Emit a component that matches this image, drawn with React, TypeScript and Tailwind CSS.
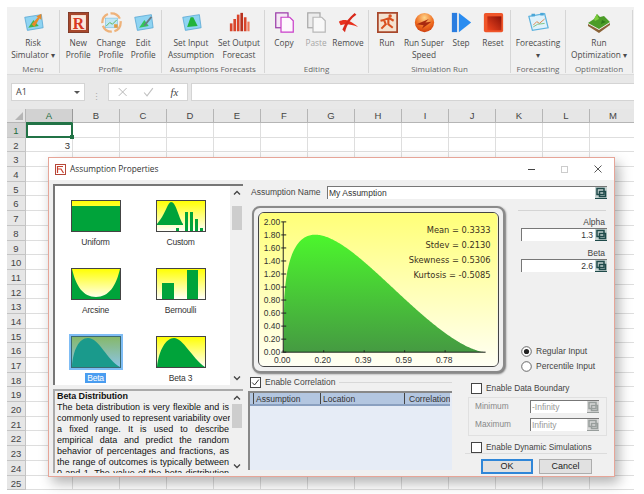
import React from "react";

const ribbonFont = "font-['Open_Sans',sans-serif]";
const dlgFont = "font-['Liberation_Sans',sans-serif]";
const ic = "w-[21px] h-[21px]";

function Panel({ children }: { children?: React.ReactNode }) {
  return (
    <svg viewBox="0 0 24 24" className={ic}>
      <polygon points="2,6 21,3 23,18 5,21" fill="#8fd4f2" stroke="#4b9fd0" strokeWidth="0.8" />
      {children}
    </svg>
  );
}

const Icons: Record<string, React.ReactNode> = {
  risk: (
    <Panel>
      <polygon points="6,18 12,9 18,16" fill="#44b34a" />
      <path d="M10 14 L17 6 L15 5 L21 2 L21 9 L19 7 L13 17 Z" fill="#e8892a" />
    </Panel>
  ),
  newp: (
    <svg viewBox="0 0 24 24" className={ic}>
      <rect x="0.5" y="0.5" width="23" height="23" fill="#a8482c" stroke="#7a3320" />
      <rect x="3.5" y="3.5" width="17" height="17" fill="#fbe9dc" />
      <text x="12" y="19" textAnchor="middle" fontSize="18" fontWeight="700" fill="#d8371f" fontFamily="Liberation Serif, serif">R</text>
    </svg>
  ),
  change: (
    <svg viewBox="0 0 24 24" className={ic}>
      <circle cx="12" cy="12" r="10.5" fill="none" stroke="#eeb27a" strokeWidth="2.6" strokeDasharray="13 3" />
      <rect x="5" y="7" width="14" height="11" fill="#bfe6f6" stroke="#78bfdf" strokeWidth="0.7" />
      <polyline points="6,16 10,12 13,14 18,9" fill="none" stroke="#5fb55f" strokeWidth="1.1" />
      <rect x="15" y="14" width="4" height="4" fill="#e69a3c" />
    </svg>
  ),
  edit: (
    <Panel>
      <polygon points="7,18 13,9 18,16" fill="#33c45a" />
      <path d="M12 15 L20 5 L22 6 L14 16 Z" fill="#6c7a85" />
    </Panel>
  ),
  input: (
    <Panel>
      <polygon points="7,17 11,6 14,6 19,16" fill="#22b33a" />
    </Panel>
  ),
  output: (
    <svg viewBox="0 0 24 24" className={ic}>
      <g fill="#d9442a">
        <rect x="1" y="13" width="3" height="9" />
        <rect x="5" y="8" width="3" height="14" />
        <rect x="9" y="3" width="3" height="19" />
        <rect x="13" y="1" width="3" height="21" fill="#b8321f" />
        <rect x="17" y="6" width="3" height="16" />
        <rect x="21" y="11" width="2.5" height="11" fill="#ee7a5a" />
      </g>
    </svg>
  ),
  copy: (
    <svg viewBox="0 0 24 24" className={ic}>
      <rect x="2" y="1" width="14" height="17" fill="#f4e8f4" stroke="#9a3aa8" strokeWidth="1.4" />
      <path d="M8 6 H18 L22 10 V23 H8 Z" fill="#fdf7fd" stroke="#c93fc9" strokeWidth="1.4" />
    </svg>
  ),
  paste: (
    <svg viewBox="0 0 24 24" className={ic}>
      <rect x="2" y="1" width="14" height="17" fill="#ececec" stroke="#a8a8a8" strokeWidth="1.4" />
      <path d="M8 6 H18 L22 10 V23 H8 Z" fill="#f8f8f8" stroke="#b8b8b8" strokeWidth="1.4" />
    </svg>
  ),
  remove: (
    <svg viewBox="0 0 24 24" className={ic}>
      <path d="M1 11 C8 7 14 10 23 17 C15 14 9 13 3 15 Z" fill="#e8301c" />
      <path d="M19 1 L21 3 C15 7 10 14 8 23 L5 20 C8 12 13 6 19 1 Z" fill="#d9281a" />
    </svg>
  ),
  run: (
    <svg viewBox="0 0 24 24" className={ic}>
      <rect x="1" y="1" width="22" height="22" fill="#f4e2d0" stroke="#a8482c" strokeWidth="2" />
      <path d="M5 19 L10 14 L8 9 L4 10 M8 9 L14 7 L19 10 M13 8 L13 14 L18 18" fill="none" stroke="#d9501f" strokeWidth="2.4" />
      <circle cx="15" cy="4.6" r="2" fill="#d9501f" />
    </svg>
  ),
  speed: (
    <svg viewBox="0 0 24 24" className={ic}>
      <defs>
        <radialGradient id="sp" cx="0.5" cy="0.25" r="0.8">
          <stop offset="0" stopColor="#ffd58a" />
          <stop offset="0.6" stopColor="#ee6a1e" />
          <stop offset="1" stopColor="#c8380f" />
        </radialGradient>
      </defs>
      <circle cx="12" cy="12" r="11" fill="url(#sp)" />
      <path d="M3 14 L17 8 L13 12 L20 11 L9 19 L11 15 Z" fill="#a82a10" />
    </svg>
  ),
  step: (
    <svg viewBox="0 0 24 24" className={ic}>
      <rect x="1" y="1" width="6" height="22" fill="#2a7de0" />
      <polygon points="9,1 23,12 9,23" fill="#2a8cf0" />
    </svg>
  ),
  reset: (
    <svg viewBox="0 0 24 24" className={ic}>
      <defs>
        <linearGradient id="rs" x1="1" y1="0" x2="0" y2="1">
          <stop offset="0" stopColor="#8a1208" />
          <stop offset="1" stopColor="#f0451e" />
        </linearGradient>
      </defs>
      <rect x="1" y="1" width="22" height="22" rx="2" fill="#f0562a" />
      <rect x="5" y="5" width="16" height="16" fill="url(#rs)" />
    </svg>
  ),
  forecast: (
    <svg viewBox="0 0 24 24" className={ic}>
      <polygon points="1,5 19,2 23,18 5,21" fill="#dff2fb" stroke="#5cb2de" strokeWidth="1.4" />
      <polyline points="6,15 10,11 13,13 19,8" fill="none" stroke="#e07a3a" strokeWidth="1" />
      <polyline points="6,17 11,14 19,13" fill="none" stroke="#67b86a" strokeWidth="0.9" />
      <rect x="4" y="2" width="4" height="3" fill="#4aa6d8" />
      <rect x="14" y="1" width="4" height="3" fill="#4aa6d8" />
    </svg>
  ),
  opt: (
    <svg viewBox="0 0 24 20" className="w-[24px] h-[20px]">
      <polygon points="1,11 12,17 23,10 23,12 12,20 1,13" fill="#8a6236" />
      <polygon points="1,10 7,6 10,1 13,4 17,3 23,9 12,16" fill="#4c9c28" />
      <polygon points="10,1 12,6 8,8 7,6" fill="#7ccc3c" />
      <polygon points="15,7 19,9 14,11" fill="#2f7a1a" />
    </svg>
  ),
};

type Btn = { lines: string[]; w: string; icon: string; dim?: boolean };
const groups: { label: string; w: string; btns: Btn[] }[] = [
  { label: "Menu", w: "w-[53px]", btns: [{ lines: ["Risk", "Simulator ▾"], w: "w-[53px]", icon: "risk" }] },
  {
    label: "Profile",
    w: "w-[102px]",
    btns: [
      { lines: ["New", "Profile"], w: "w-[37px]", icon: "newp" },
      { lines: ["Change", "Profile"], w: "w-[29px]", icon: "change" },
      { lines: ["Edit", "Profile"], w: "w-[36px]", icon: "edit" },
    ],
  },
  {
    label: "Assumptions Forecasts",
    w: "w-[103px]",
    btns: [
      { lines: ["Set Input", "Assumption"], w: "w-[58px]", icon: "input" },
      { lines: ["Set Output", "Forecast"], w: "w-[38px]", icon: "output" },
    ],
  },
  {
    label: "Editing",
    w: "w-[104px]",
    btns: [
      { lines: ["Copy"], w: "w-[38px]", icon: "copy" },
      { lines: ["Paste"], w: "w-[26px]", icon: "paste", dim: true },
      { lines: ["Remove"], w: "w-[38px]", icon: "remove" },
    ],
  },
  {
    label: "Simulation Run",
    w: "w-[142px]",
    btns: [
      { lines: ["Run"], w: "w-[36px]", icon: "run" },
      { lines: ["Run Super", "Speed"], w: "w-[38px]", icon: "speed" },
      { lines: ["Step"], w: "w-[36px]", icon: "step" },
      { lines: ["Reset"], w: "w-[28px]", icon: "reset" },
    ],
  },
  { label: "Forecasting", w: "w-[55px]", btns: [{ lines: ["Forecasting", "▾"], w: "w-[55px]", icon: "forecast" }] },
  { label: "Optimization", w: "w-[67px]", btns: [{ lines: ["Run", "Optimization ▾"], w: "w-[67px]", icon: "opt" }] },
];

function Ribbon() {
  return (
    <div className={`flex h-[67px] bg-[#f1f1f1] ${ribbonFont}`}>
      {groups.map((g) => (
        <div key={g.label} className={`${g.w} h-full pt-[3px] pb-[1px]`}>
          <div className="h-full flex flex-col border-r border-[#d6d6d6]">
            <div className="flex h-[55px] shrink-0">
              {g.btns.map((b) => (
                <div key={b.lines.join()} className={`${b.w} flex flex-col items-center`}>
                  <div className="h-[25px] flex items-center justify-center">{Icons[b.icon]}</div>
                  <div
                    className={`mt-[2px] text-[8.3px] leading-[12px] text-center whitespace-nowrap ${
                      b.dim ? "text-[#a6a6a6]" : "text-[#4a4a4a]"
                    }`}
                  >
                    {b.lines.map((l) => (
                      <div key={l}>{l}</div>
                    ))}
                  </div>
                </div>
              ))}
            </div>
            <div className="text-center text-[8px] leading-[8px] text-[#666] whitespace-nowrap">{g.label}</div>
          </div>
        </div>
      ))}
    </div>
  );
}

function FormulaBar() {
  return (
    <div className={`h-[35px] bg-[#e8e8e8] border-t border-[#dcdcdc] pl-[4px] pt-[8px] flex ${ribbonFont}`}>
      <div className="w-[74px] h-[18px] bg-white border border-[#d4d4d4] flex items-center justify-between pl-[4px] pr-[4px] text-[9px] text-[#444]">
        <span>A1</span>
        <span className="w-0 h-0 border-x-[3px] border-x-transparent border-t-[3px] border-t-[#555]" />
      </div>
      <div className="w-[23px] flex items-center justify-center text-[9px] leading-none text-[#aaa]">⋮</div>
      <div className="w-[80px] h-[18px] bg-white border border-[#d4d4d4] flex items-center text-[#a8a8a8]">
        <svg viewBox="0 0 80 16" className="w-[78px] h-[16px]">
          <path d="M10 4 L18 12 M18 4 L10 12" stroke="#b5b5b5" strokeWidth="1" fill="none" />
          <path d="M36 8.5 L39 12 L45 4" stroke="#c0c0c0" strokeWidth="1.1" fill="none" />
          <text x="63" y="12" fontSize="11" fontStyle="italic" fontFamily="Liberation Serif, serif" fill="#444">fx</text>
        </svg>
      </div>
      <div className="flex-1 ml-[3px] h-[18px] bg-white border-y border-l border-[#d4d4d4]" />
    </div>
  );
}

const cols = ["A", "B", "C", "D", "E", "F", "G", "H", "I", "J", "K", "L", "M"];
const rows = Array.from({ length: 25 }, (_, i) => i + 1);

function Sheet() {
  return (
    <div className="overflow-hidden font-['Liberation_Sans',sans-serif] text-[#444]">
      <div className="flex h-[14px] bg-[#e6e6e6]">
        <div className="w-[19px] shrink-0 flex items-end justify-end pr-[2px] pb-[2px] border-r border-b border-[#b5b5b5]">
          <div className="w-0 h-0 border-l-[8px] border-l-transparent border-b-[8px] border-b-[#b5b5b5]" />
        </div>
        {cols.map((c) => (
          <div
            key={c}
            className={`w-[47px] shrink-0 text-center text-[9.5px] leading-[14px] border-r border-b ${
              c === "A" ? "bg-[#d2d2d2] border-[#9a9a9a] text-[#1d6b40] border-b-[#217346]" : "border-[#b5b5b5]"
            }`}
          >
            {c}
          </div>
        ))}
      </div>
      {rows.map((r) => (
        <div key={r} className="flex h-[14.7px]">
          <div
            className={`w-[19px] shrink-0 text-center text-[9.5px] leading-[16px] border-r border-b border-[#c4c4c4] ${
              r === 1 ? "bg-[#d2d2d2] text-[#1d6b40]" : "bg-[#e6e6e6]"
            }`}
          >
            {r}
          </div>
          {cols.map((c) => (
            <div
              key={c}
              className={`w-[47px] shrink-0 text-right pr-[2px] text-[9.5px] leading-[15px] text-[#333] ${
                r === 1 && c === "A" ? "relative border-2 border-[#217346]" : "border-r border-b border-[#dedede]"
              }`}
            >
              {r === 2 && c === "A" ? "3" : ""}
              {r === 1 && c === "A" ? (
                <span className="absolute right-[-3px] bottom-[-3px] w-[4px] h-[4px] bg-[#217346]" />
              ) : null}
            </div>
          ))}
        </div>
      ))}
    </div>
  );
}

function Chevron({ up }: { up?: boolean }) {
  return (
    <svg viewBox="0 0 10 10" className="w-[10px] h-[10px]">
      <path d={up ? "M2 6.5 L5 3.5 L8 6.5" : "M2 3.5 L5 6.5 L8 3.5"} fill="none" stroke="#444" strokeWidth="1.3" />
    </svg>
  );
}

function ScrollBar({ thumbTop }: { thumbTop: string }) {
  return (
    <div className="w-[13px] h-full bg-[#f0f0f0] flex flex-col items-center py-[2px]">
      <Chevron up />
      <div className={`w-[10px] h-[24px] bg-[#cdcdcd] ${thumbTop}`} />
      <div className="flex-1" />
      <Chevron />
    </div>
  );
}

function Thumb({ kind }: { kind: string }) {
  const sel = kind === "beta";
  const shape: Record<string, React.ReactNode> = {
    uniform: <rect x="1" y="6" width="48" height="25" fill="#00a33a" />,
    custom: (
      <g fill="#00a33a">
        <path d="M1 24 L4 20 C10 12 12 2 15 2 C20 2 22 16 27 24 L27 25 L1 25 Z" />
        <rect x="1" y="24" width="26" height="7" opacity="0" />
        <rect x="20" y="28" width="3" height="3" />
        <rect x="29" y="12" width="3" height="19" />
        <rect x="34" y="12" width="3" height="19" />
        <rect x="39" y="19" width="3" height="12" />
        <rect x="44" y="28" width="3" height="3" />
      </g>
    ),
    arcsine: <path d="M1 1 C5 18 12 29 25 29 C38 29 45 18 49 1 V31 H1 Z" fill="#00a33a" />,
    bernoulli: (
      <g fill="#00a33a">
        <rect x="6" y="15" width="12" height="16" />
        <rect x="31" y="2" width="11" height="29" />
      </g>
    ),
    beta: <path d="M1 31 C2 14 8 2 17 2 C28 2 36 24 49 31 Z" fill="#1a9a8c" />,
    beta3: <path d="M1 31 C3 14 10 2 18 2 C27 2 36 22 49 31 Z" fill="#00a33a" />,
  };
  return (
    <div className={sel ? "p-[2px] bg-[#7fbdf5]" : "p-[2px]"}>
      <svg viewBox="0 0 50 32" className="w-[50px] h-[32px] block">
        <defs>
          <linearGradient id={`t-${kind}`} x1="0" y1="0" x2="0" y2="1">
            <stop offset="0" stopColor={sel ? "#86b868" : "#ffff00"} />
            <stop offset="1" stopColor={sel ? "#8cc4e8" : "#ffffff"} />
          </linearGradient>
        </defs>
        <rect x="0.5" y="0.5" width="49" height="31" fill={`url(#t-${kind})`} />
        {shape[kind]}
        <rect x="0.5" y="0.5" width="49" height="31" fill="none" stroke={sel ? "#3c6a72" : "#444"} />
      </svg>
    </div>
  );
}

const dists = [
  ["Uniform", "uniform"],
  ["Custom", "custom"],
  ["Arcsine", "arcsine"],
  ["Bernoulli", "bernoulli"],
  ["Beta", "beta"],
  ["Beta 3", "beta3"],
];

const desc = [
  "The beta distribution is very flexible and is",
  "commonly used to represent variability over",
  "a fixed range. It is used to describe",
  "empirical data and predict the random",
  "behavior of percentages and fractions, as",
  "the range of outcomes is typically between",
  "0 and 1. The value of the beta distribution",
];

function LeftColumn() {
  return (
    <div className="w-[190px] shrink-0 flex flex-col gap-[4px]">
      <div className="h-[201px] bg-white border-l-2 border-t-2 border-[#777] flex overflow-hidden">
        <div className="flex-1 grid grid-cols-[85px_85px] content-start pt-[12px] -ml-[2px]">
          {dists.map(([n, k]) => (
            <div key={k} className="h-[68px] flex flex-col items-center">
              <Thumb kind={k} />
              <div
                className={`mt-[3px] text-[8.5px] leading-[10px] tracking-[-0.2px] text-[#333] ${
                  k === "beta" ? "bg-[#4a9df0] text-white px-[2px]" : ""
                }`}
              >
                {n}
              </div>
            </div>
          ))}
        </div>
        <ScrollBar thumbTop="mt-[8px]" />
      </div>
      <div className="h-[84px] border-l-2 border-t-2 border-[#aaa] bg-[#f0f0f0] flex overflow-hidden">
        <div className="flex-1 pl-[2px] pr-[1px] overflow-hidden text-[9px] leading-[11px] text-[#111]">
          <div className="font-bold tracking-[-0.1px]">Beta Distribution</div>
          {desc.map((l) => (
            <div key={l} className="text-justify [text-align-last:justify] whitespace-nowrap">
              {l}
            </div>
          ))}
        </div>
        <ScrollBar thumbTop="mt-[1px]" />
      </div>
    </div>
  );
}

function Pick({ dim }: { dim?: boolean }) {
  const c = dim ? "#989e9c" : "#1f4a4a";
  return (
    <svg viewBox="0 0 12 12" className="w-[12px] h-[12px] shrink-0">
      <rect x="0" y="0" width="12" height="12" fill={dim ? "#d8d8d8" : "#c4d2d0"} />
      <rect x="2" y="1.5" width="7" height="6" fill="none" stroke={c} strokeWidth="1.5" />
      <rect x="4.5" y="4.5" width="6" height="5" fill="none" stroke={c} strokeWidth="1.5" />
      <rect x="0" y="11" width="12" height="1" fill={c} />
    </svg>
  );
}

function Input({ w, text, right, dim }: { w: string; text: string; right?: boolean; dim?: boolean }) {
  return (
    <div className={`${w} h-[13px] bg-white border-l border-t border-[#777] flex items-center`}>
      <div
        className={`flex-1 pl-[1px] pr-[2px] text-[8.5px] leading-[12px] whitespace-nowrap ${right ? "text-right" : ""} ${
          dim ? "text-[#999]" : "text-[#333]"
        }`}
      >
        {text}
      </div>
      <Pick dim={dim} />
    </div>
  );
}

function Box({ checked }: { checked?: boolean }) {
  return (
    <svg viewBox="0 0 11 11" className="w-[11px] h-[11px] shrink-0">
      <rect x="0.5" y="0.5" width="10" height="10" fill="#fff" stroke="#444" />
      {checked ? <path d="M2.2 5.5 L4.5 8 L8.8 2.6" fill="none" stroke="#333" strokeWidth="1" /> : null}
    </svg>
  );
}

function Radio({ on }: { on?: boolean }) {
  return (
    <svg viewBox="0 0 11 11" className="w-[11px] h-[11px] shrink-0">
      <circle cx="5.5" cy="5.5" r="4.8" fill="#fff" stroke="#444" strokeWidth="0.8" />
      {on ? <circle cx="5.5" cy="5.5" r="2.6" fill="#222" /> : null}
    </svg>
  );
}

function betaPath() {
  const pts: string[] = [];
  for (let i = 0; i <= 200; i++) {
    const x = i / 200;
    const y = (Math.pow(x, 0.3) * Math.pow(1 - x, 1.6)) / 0.2421;
    pts.push(`${(24 + x * 205).toFixed(2)},${(141 - y * 66).toFixed(2)}`);
  }
  return `M24,141 L${pts.join(" L")} Z`;
}

const yLabels = ["2.00", "1.80", "1.60", "1.40", "1.20", "1.00", "0.80", "0.60", "0.40", "0.20", "0.00"];
const xLabels: [string, number][] = [
  ["0.00", 23],
  ["0.20", 64],
  ["0.39", 105],
  ["0.59", 146],
  ["0.78", 187],
];
const stats = ["Mean = 0.3333", "Stdev = 0.2130", "Skewness = 0.5306", "Kurtosis = -0.5085"];

function Chart() {
  return (
    <div className="w-[253px] h-[167px] ml-[4px] shrink-0 rounded-[8px] border-2 border-[#8a8a8a] bg-[#f0f0f0] p-[4px] shadow-[1px_1px_2px_#777]">
      <div className="w-[241px] h-[155px] rounded-[6px] border border-[#444] overflow-hidden">
        <svg viewBox="0 0 241 155" className="w-[239px] h-[153px] block">
          <defs>
            <linearGradient id="bg" x1="0" y1="0" x2="0" y2="1">
              <stop offset="0" stopColor="#ffff78" />
              <stop offset="1" stopColor="#fffff4" />
            </linearGradient>
            <linearGradient id="gr" gradientUnits="userSpaceOnUse" x1="0" y1="20" x2="0" y2="141">
              <stop offset="0" stopColor="#4cf82c" />
              <stop offset="1" stopColor="#459a42" />
            </linearGradient>
          </defs>
          <rect width="241" height="155" fill="url(#bg)" />
          <path d={betaPath()} fill="url(#gr)" />
          <path d="M24 9 V141 H229" fill="none" stroke="#222" strokeWidth="1" />
          <g fontFamily="Liberation Sans, sans-serif" fontSize="8.6" fill="#333">
            {yLabels.map((l, i) => (
              <g key={l}>
                <line x1="22" x2="27" y1={9 + i * 13.2} y2={9 + i * 13.2} stroke="#222" />
                <text x="21" y={12 + i * 13.2} textAnchor="end">{l}</text>
              </g>
            ))}
            {xLabels.map(([l, x]) => (
              <g key={l}>
                <line x1={x + 1} x2={x + 1} y1="139" y2="141" stroke="#222" />
                <text x={x} y="152" textAnchor="middle">{l}</text>
              </g>
            ))}
          </g>
          <g fontFamily="DejaVu Sans, sans-serif" fontSize="8.4" fill="#3a3020" textAnchor="end">
            {stats.map((s, i) => (
              <text key={s} x="234" y={20 + i * 15.4}>{s}</text>
            ))}
          </g>
        </svg>
      </div>
    </div>
  );
}

function SidePanel() {
  return (
    <div className="w-[88px] ml-[13px] shrink-0 flex flex-col text-[8.5px] leading-[11px] text-[#444]">
      <div className="mt-[4px] h-px bg-[#d4d4d4]" />
      <div className="mt-[6px] text-right pr-[1px]">Alpha</div>
      <div className="ml-[3px]">
        <Input w="w-[86px]" text="1.3" right />
      </div>
      <div className="mt-[7px] text-right pr-[1px]">Beta</div>
      <div className="ml-[3px]">
        <Input w="w-[86px]" text="2.6" right />
      </div>
      <div className="mt-[73px] ml-[3px] flex items-center gap-[4px] h-[12px]">
        <Radio on />
        <span>Regular Input</span>
      </div>
      <div className="mt-[3px] ml-[3px] flex items-center gap-[4px] h-[12px]">
        <Radio />
        <span>Percentile Input</span>
      </div>
    </div>
  );
}

function Correlation() {
  return (
    <div className="w-[204px] shrink-0 flex flex-col">
      <div className="flex items-center h-[11px] pl-[2px] gap-[4px] text-[8.5px] text-[#444]">
        <Box checked />
        <span className="whitespace-nowrap">Enable Correlation</span>
        <div className="flex-1 h-px bg-[#d8d8d8]" />
      </div>
      <div className="mt-[3px] h-[79px] border-l-2 border-t-2 border-[#888] bg-[#e6ecf6]">
        <div className="h-[13px] mr-[2px] flex bg-[#b3c6e0] border-b-2 border-[#8aa0c0] text-[8.5px] leading-[12px] text-[#333]">
          <div className="w-[4px] border-r border-[#444]" />
          <div className="w-[67px] pl-[2px] border-r border-[#444]">Assumption</div>
          <div className="w-[84px] pl-[2px] border-r border-[#444]">Location</div>
          <div className="flex-1 pl-[4px] whitespace-nowrap overflow-hidden">Correlation</div>
        </div>
      </div>
    </div>
  );
}

function Boundary() {
  return (
    <div className="ml-[16px] w-[139px] shrink-0 flex flex-col text-[8.3px] leading-[11px] text-[#444]">
      <div className="mt-[6px] ml-[3px] flex items-center gap-[4px] h-[11px]">
        <Box />
        <span>Enable Data Boundary</span>
      </div>
      <div className="mt-[3px] h-[39px] border border-[#e0e0e0] flex flex-col gap-[5px] pt-[2px] pl-[6px] text-[#888]">
        <div className="flex items-center h-[13px]">
          <span className="w-[55px]">Minimum</span>
          <Input w="w-[69px]" text="-Infinity" dim />
        </div>
        <div className="flex items-center h-[13px]">
          <span className="w-[55px]">Maximum</span>
          <Input w="w-[69px]" text="Infinity" dim />
        </div>
      </div>
      <div className="mt-[6px] ml-[3px] flex items-center gap-[4px] h-[11px] whitespace-nowrap">
        <Box />
        <span>Enable Dynamic Simulations</span>
      </div>
      <div className="h-px bg-[#dcdcdc] -ml-[3px]" />
      <div className="mt-[5px] ml-[13px] flex gap-[6px]">
        <div className="w-[52px] h-[15px] border-2 border-[#2f86d8] bg-[#e1e1e1] text-center text-[9px] leading-[11px] text-[#222]">OK</div>
        <div className="w-[53px] h-[15px] border border-[#adadad] bg-[#e1e1e1] text-center text-[9px] leading-[13px] text-[#222]">Cancel</div>
      </div>
    </div>
  );
}

function Dialog() {
  return (
    <div className={`absolute left-[48px] top-[157px] w-[567px] h-[320px] border border-[#e6a598] bg-[#f0f0f0] shadow-[4px_6px_12px_rgba(0,0,0,0.3)] flex flex-col ${dlgFont}`}>
      <div className="h-[22px] shrink-0 bg-white flex items-center pl-[6px]">
        <svg viewBox="0 0 11 11" className="w-[11px] h-[11px]">
          <rect x="0.5" y="0.5" width="10" height="10" fill="#fff" stroke="#b5483a" />
          <path d="M2.5 9 V2.5 H8 M2.5 5 H6 L8.5 9" fill="none" stroke="#c8402c" strokeWidth="1.2" />
        </svg>
        <span className="ml-[4px] text-[8.3px] text-[#333] font-['Open_Sans',sans-serif]">Assumption Properties</span>
        <div className="flex-1" />
        <div className="flex items-center gap-[26px] pr-[12px]">
          <div className="w-[7px] h-px bg-[#444]" />
          <div className="w-[7px] h-[7px] border border-[#ccc]" />
          <svg viewBox="0 0 8 8" className="w-[8px] h-[8px]">
            <path d="M0.5 0.5 L7.5 7.5 M7.5 0.5 L0.5 7.5" stroke="#444" strokeWidth="0.9" />
          </svg>
        </div>
      </div>
      <div className="flex pl-[4px] pt-[4px]">
        <LeftColumn />
        <div className="ml-[5px] w-[359px] flex flex-col">
          <div className="h-[16px] flex items-center pl-[3px] text-[8.5px] text-[#444]">
            <span className="w-[76px] whitespace-nowrap">Assumption Name</span>
            <Input w="w-[280px]" text="My Assumption" />
          </div>
          <div className="mt-[6px] flex">
            <Chart />
            <SidePanel />
          </div>
          <div className="mt-[4px] flex">
            <Correlation />
            <Boundary />
          </div>
        </div>
      </div>
    </div>
  );
}

export default function App() {
  return (
    <div className="relative w-[644px] h-[494px] bg-white overflow-hidden pt-[7px] pl-[7px]">
      <div className="w-[627px]">
        <Ribbon />
        <FormulaBar />
        <Sheet />
      </div>
      <Dialog />
    </div>
  );
}
